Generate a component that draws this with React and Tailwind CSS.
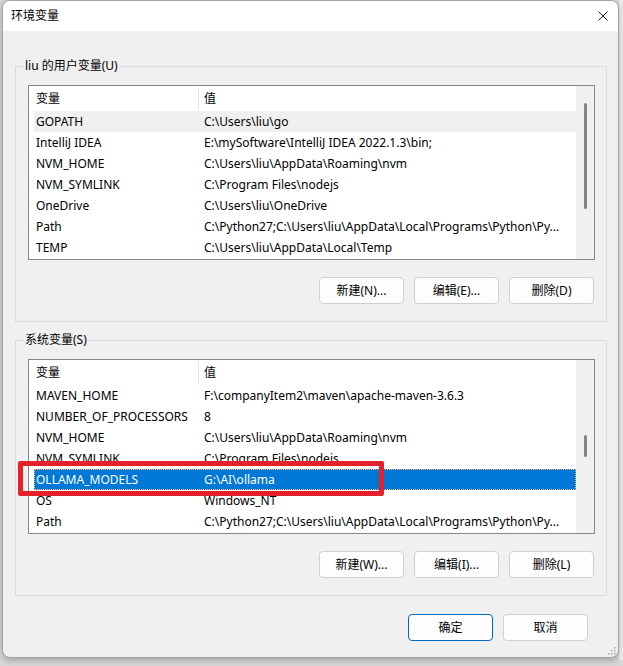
import React from "react";

const FONT = {
  fontFamily: '"Noto Sans", "Noto Sans CJK SC", sans-serif',
};

const userVars = [
  ["GOPATH", "C:\\Users\\liu\\go"],
  ["IntelliJ IDEA", "E:\\mySoftware\\IntelliJ IDEA 2022.1.3\\bin;"],
  ["NVM_HOME", "C:\\Users\\liu\\AppData\\Roaming\\nvm"],
  ["NVM_SYMLINK", "C:\\Program Files\\nodejs"],
  ["OneDrive", "C:\\Users\\liu\\OneDrive"],
  ["Path", "C:\\Python27;C:\\Users\\liu\\AppData\\Local\\Programs\\Python\\Py..."],
  ["TEMP", "C:\\Users\\liu\\AppData\\Local\\Temp"],
];

const sysVars = [
  ["MAVEN_HOME", "F:\\companyItem2\\maven\\apache-maven-3.6.3"],
  ["NUMBER_OF_PROCESSORS", "8"],
  ["NVM_HOME", "C:\\Users\\liu\\AppData\\Roaming\\nvm"],
  ["NVM_SYMLINK", "C:\\Program Files\\nodejs"],
  ["OLLAMA_MODELS", "G:\\AI\\ollama"],
  ["OS", "Windows_NT"],
  ["Path", "C:\\Python27;C:\\Users\\liu\\AppData\\Local\\Programs\\Python\\Py..."],
];

function Button({ children, primary }) {
  return (
    <button
      className={
        "h-[27px] w-[85px] rounded-[4px] border bg-[#fdfdfd] text-[12px] leading-[16px] text-black " +
        (primary ? "border-[#0067c0]" : "border-[#d0d0d0]")
      }
    >
      {children}
    </button>
  );
}

function VarList({ rows, hover, selected, thumbTop, thumbHeight }) {
  return (
    <div className="ml-[12px] mt-[18px] flex h-[175px] w-[567px] overflow-hidden border border-[#868686] bg-white">
      <div className="flex-1 overflow-hidden">
        <div className="ml-[5px] flex h-[25px] items-center">
          <div className="w-[164px] pl-[2px]">变量</div>
          <div className="h-[23px] w-px bg-[#e5e5e5]" />
          <div className="pl-[5px]">值</div>
        </div>
        {rows.map(([name, value], i) => (
          <div
            key={name + i}
            className={
              "ml-[5px] flex h-[21px] items-center whitespace-nowrap " +
              (i === selected
                ? "bg-[#0078d7] text-white outline-1 -outline-offset-1 outline-dotted outline-[#f7b46a]"
                : i === hover
                  ? "bg-[#f0f0f0]"
                  : "")
            }
          >
            <div className="w-[164px] overflow-hidden pl-[2px]">{name}</div>
            <div className="flex-1 overflow-hidden pl-[6px]">{value}</div>
          </div>
        ))}
      </div>
      <div className="flex w-[18px] justify-center bg-[#f0f0f0]" style={{ paddingTop: thumbTop }}>
        <div className="w-[3px] rounded-full bg-[#858585]" style={{ height: thumbHeight }} />
      </div>
    </div>
  );
}

function Group({ label, children }) {
  return (
    <div className="relative ml-[12px] w-[592px] border border-[#dcdcdc]">
      <span className="absolute -top-[9px] left-[8px] bg-[#f0f0f0] px-[1px] leading-[16px]">
        {label}
      </span>
      {children}
    </div>
  );
}

export default function App() {
  return (
    <div
      className="relative h-[666px] w-[623px] overflow-hidden bg-[#d6d6d6] pl-[2px] text-[12px] text-black"
      style={FONT}
    >
      <div className="absolute right-0 top-0 h-[660px] w-[4px] bg-[#eeeeee]" />
      <div className="relative flex h-[658px] w-[617px] flex-col overflow-hidden rounded-[8px] border border-[#a3a3a3] bg-[#f0f0f0] shadow-[0_2px_6px_rgba(0,0,0,0.25)]">
        <div className="flex h-[30px] items-center justify-between bg-white pl-[8px] pr-[10px]">
          <span className="leading-[16px]">环境变量</span>
          <svg width="10" height="10" viewBox="0 0 10 10">
            <path d="M0.5 0.5 L9.5 9.5 M9.5 0.5 L0.5 9.5" stroke="#1a1a1a" strokeWidth="1" />
          </svg>
        </div>

        <div className="mt-[35px]">
          <Group label="liu 的用户变量(U)">
            <VarList rows={userVars} hover={0} thumbTop={17} thumbHeight={106} />
            <div className="mt-[17px] flex justify-end gap-[10px] pb-[17px] pr-[12px]">
              <Button>新建(N)...</Button>
              <Button>编辑(E)...</Button>
              <Button>删除(D)</Button>
            </div>
          </Group>
        </div>

        <div className="mt-[18px]">
          <Group label="系统变量(S)">
            <VarList rows={sysVars} selected={4} thumbTop={75} thumbHeight={22} />
            <div className="mt-[17px] flex justify-end gap-[10px] pb-[17px] pr-[12px]">
              <Button>新建(W)...</Button>
              <Button>编辑(I)...</Button>
              <Button>删除(L)</Button>
            </div>
          </Group>
        </div>

        <div className="mt-[18px] flex justify-end gap-[10px] pr-[30px]">
          <Button primary>确定</Button>
          <Button>取消</Button>
        </div>

        <svg className="absolute bottom-[2px] right-[2px]" width="8" height="8" viewBox="0 0 8 8">
          <g fill="#a8a8a8">
            <rect x="6" y="0" width="1.5" height="1.5" />
            <rect x="3" y="3" width="1.5" height="1.5" />
            <rect x="6" y="3" width="1.5" height="1.5" />
            <rect x="0" y="6" width="1.5" height="1.5" />
            <rect x="3" y="6" width="1.5" height="1.5" />
            <rect x="6" y="6" width="1.5" height="1.5" />
          </g>
        </svg>
      </div>

      <div className="pointer-events-none absolute left-[18px] top-[461px] h-[35px] w-[366px] rounded-[2px] border-[5px] border-[#e5222b]" />
    </div>
  );
}
